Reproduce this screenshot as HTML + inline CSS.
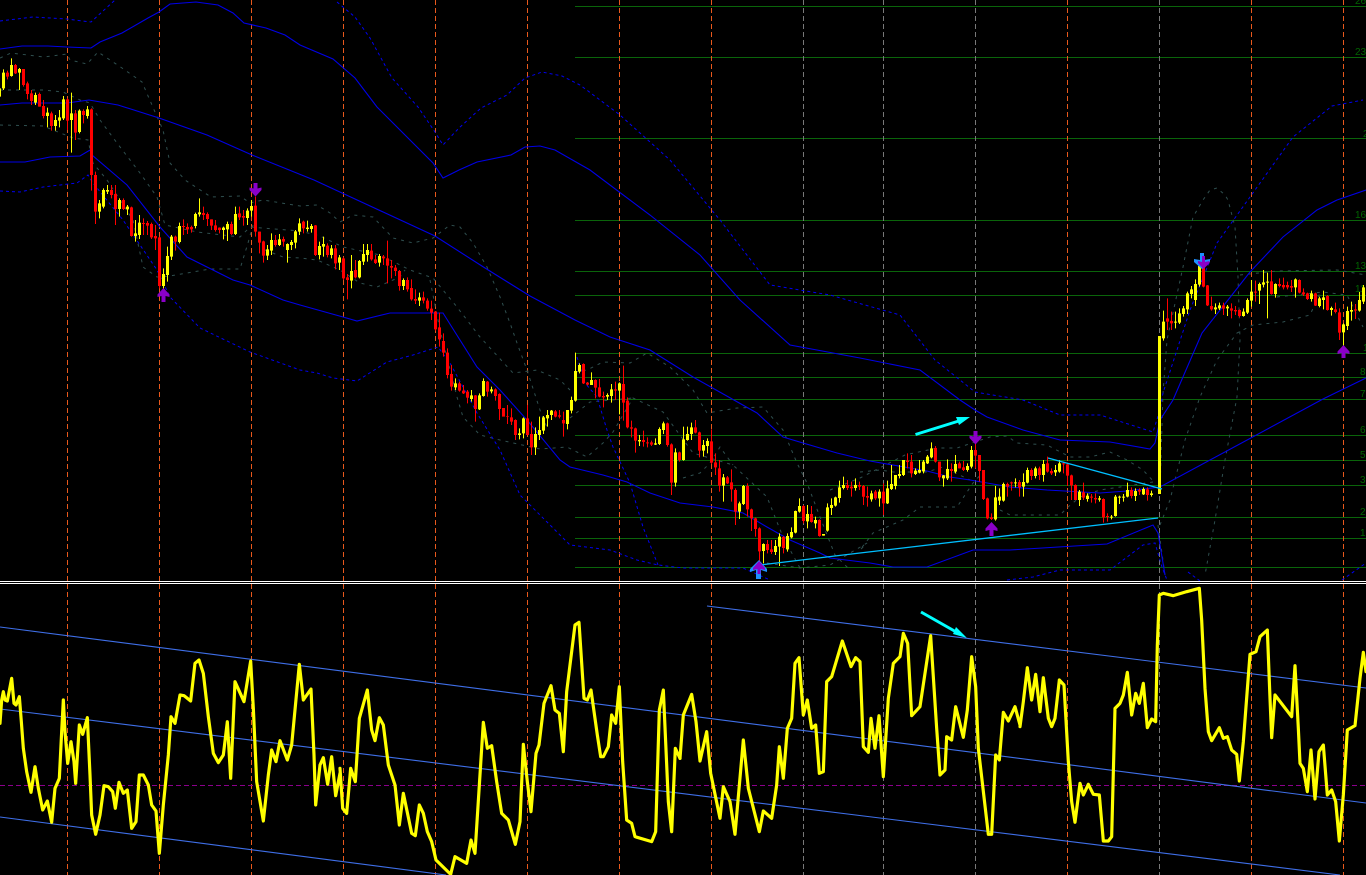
<!DOCTYPE html>
<html lang="en"><head><meta charset="utf-8"><title>Chart</title>
<style>html,body{margin:0;padding:0;background:#000;width:1366px;height:875px;overflow:hidden}svg{display:block}text{font-family:"Liberation Sans",sans-serif;font-size:10px;fill:#006400}</style></head>
<body>
<svg width="1366" height="875" viewBox="0 0 1366 875" xmlns="http://www.w3.org/2000/svg">
<rect width="1366" height="875" fill="#000"/>
<!-- horizontal levels -->
<path stroke="#0a640a" stroke-width="1" fill="none" d="M575 6.5H1366M575 57.5H1366M575 138.5H1366M575 220.5H1366M575 271.5H1366M575 295.5H1366M575 353.5H1366M575 377.5H1366M575 399.5H1366M575 435.5H1366M575 460.5H1366M575 485.5H1366M575 517.5H1366M575 538.5H1366M575 567.5H1366"/>
<text x="1355" y="4">2650</text><text x="1355" y="55">2350</text><text x="1363" y="137">20</text><text x="1355" y="218">1650</text><text x="1355" y="269">1350</text><text x="1355" y="292">1150</text><text x="1363" y="351">10</text><text x="1360" y="375">8</text><text x="1360" y="397">7</text><text x="1360" y="433">6</text><text x="1360" y="458">5</text><text x="1360" y="483">3</text><text x="1360" y="515">2</text><text x="1360" y="536">1</text>
<!-- vertical separators -->
<path stroke="#e8581c" stroke-width="1" stroke-dasharray="5 3" fill="none" d="M67.5 0V875M159.5 0V875M251.5 0V875M343.5 0V875M435.5 0V875M527.5 0V875M619.5 0V875M711.5 0V875M1067.5 0V875M1251.5 0V875M1343.5 0V875"/>
<path stroke="#787878" stroke-width="1" stroke-dasharray="5 3" fill="none" d="M803.5 0V875M883.5 0V875M975.5 0V875M1159.5 0V875"/>
<!-- grey dashed bands -->
<g fill="none" stroke="#2f4f4f" stroke-width="1" stroke-dasharray="3 5">
<polyline points="0,58 11,53 44,57 67,54 70,60 87,64 98,52 122,68 142,82 155,112 163,130 170,163 185,180 211,197 240,196 250,203 263,200 300,206 317,205 330,213 340,222 353,215 373,217 393,238 413,243 433,238 450,225 460,227 473,243 487,267 500,297 510,323 517,343 527,370 540,410 548,430"/>
<polyline points="0,90 20,90 43,90 63,92 80,100 90,103 100,120 117,143 140,173 157,197 165,225 197,232 240,237 250,227 300,231 320,236 343,247 380,255 410,270 433,278 457,307 480,337 513,373 537,370 560,380 570,390"/>
<polyline points="0,125 43,126 73,138 88,140 93,163 107,180 133,220 143,267 157,277 170,276 187,273 210,269 240,269 248,243 253,225"/>
<polyline points="265,250 283,257 300,258 317,260 340,270 360,283 377,287 400,277 405,270"/>
<polyline points="430,280 440,330 457,397 463,417 480,435 500,440 540,449 567,447 587,457 603,443 613,432 633,398 663,412 693,453 733,465 767,497 783,537 800,568"/>
<polyline points="575,372 587,370 603,362 630,363 647,353 670,367 693,390 707,413 737,408 763,407 783,430 797,463 807,483 820,517 835,555 850,570"/>
<polyline points="570,418 590,402 633,398"/>
<polyline points="683,478 700,473 710,463 720,447 733,465"/>
<polyline points="767,563 800,568 830,565 867,543 860,550 873,533 903,520 920,507 957,507 973,483 985,470"/>
<polyline points="860,472 880,470 893,472 927,472 943,467 970,480"/>
<polyline points="830,490 860,478 905,455 937,448 957,448 990,437 1007,436 1017,443 1047,445 1070,457 1090,457 1110,452 1127,460 1143,470 1155,483"/>
<polyline points="1000,510 1010,515 1060,515 1068,507 1080,497 1100,490 1153,482"/>
<polyline points="1160,490 1163,393 1167,340 1183,267 1193,217 1203,200 1210,190 1217,188 1225,195 1228,200 1235,227 1238,277 1240,340 1237,397 1225,460 1215,520 1205,575"/>
<polyline points="1160,525 1170,500 1185,440 1200,397 1217,360 1237,333 1253,325 1283,322 1310,315 1320,293"/>
<polyline points="1240,275 1277,271 1337,270 1366,275"/>
<polyline points="1277,297 1323,292 1347,295 1363,327"/>
<polyline points="1158,525 1165,575"/>
</g>
<!-- blue dotted bands -->
<g fill="none" stroke="#0000f0" stroke-width="1" stroke-dasharray="3 3">
<polyline points="0,21 33,17 67,19 91,22 115,0"/>
<polyline points="337,2 355,17 370,38 392,78 418,107 435,132 443,145 459,128 481,108 507,95 525,78 542,72 562,76 580,85 620,115 670,160 720,220 770,285 830,295 900,315 935,360 975,392 1023,400 1060,415 1100,415 1153,432 1160,410 1163,393 1190,310 1217,243 1250,197 1293,137 1332,106 1363,100"/>
<polyline points="0,191 20,192 43,187 77,183 88,175 93,183 123,220 157,270 170,297 200,328 250,352 300,370 317,373 333,378 357,381 387,362 413,355 438,347 450,363 477,413 500,450 520,495 570,545 610,550 637,560 658,565 683,568 743,568 770,580"/>
<polyline points="577,357 585,383 597,397 607,430 613,447 630,483 643,527 658,565"/>
<polyline points="1007,580 1033,577 1060,570 1110,570 1143,545 1155,543 1162,567 1167,580"/>
<polyline points="1342,580 1366,563"/>
<polyline points="1188,572 1200,581"/>
</g>
<!-- blue solid bands -->
<g fill="none" stroke="#0000e6" stroke-width="1.1">
<polyline points="0,105 22,103 67,103 89,100 118,105 159,118 207,135 252,155 314,180 355,199 435,236 485,268 530,296 575,320 610,337 650,350 693,377 757,413 783,437 803,443 837,453 870,461 927,471 950,477 970,480 1010,487 1047,490 1100,493 1127,491 1160,487 1323,399 1366,378"/>
<polyline points="0,162 25,162 50,157 80,156 90,150 92,155 127,185 160,227 187,257 233,280 250,285 283,300 300,305 343,317 357,321 390,313 420,313 443,313 477,367 500,390 527,420 560,460 570,467 603,475 627,482 650,493 680,503 713,507 743,513 767,527 790,540 820,553 830,558 870,563 893,567 927,567 973,550 1010,550 1107,544 1153,525 1158,533 1165,575"/>
<polyline points="0,49 22,46 48,46 67,47 91,48 100,42 122,33 148,18 159,12 170,4 196,2 218,5 233,13 244,23 266,28 285,35 300,45 333,59 355,78 377,107 407,137 433,163 443,178 459,170 477,162 511,155 525,147 540,146 555,150 590,170 650,215 700,255 740,300 790,345 860,358 920,370 960,400 975,410 987,417 1023,430 1060,440 1110,442 1150,449 1155,443 1160,420 1173,400 1202,333 1250,272 1283,237 1317,210 1337,200 1366,190"/>
</g>
<!-- candles group 1 -->
<g transform="translate(0.5,40) scale(1,0.33333)" fill="none">
<path stroke="#ffff00" stroke-width="1" d="M3 88V150M11 55V110M19 84V150M35 158V195M47 203V262M55 225V272M59 210V262M63 168V240M71 158V338M79 208V280M87 198V236M99 480V535M103 445V505M107 435V462M119 475V530M127 495V525M135 540V605M139 525V597M163 685V765M167 620V725M171 585V660M179 548V610M195 518V565M199 475V530M223 560V598M227 545V603M235 500V585M247 505V555M251 480V530M267 615V660M271 580V645M279 582V618M287 610V668M291 600V630M295 570V625M299 535V585"/>
<path stroke="#ff0000" stroke-width="1" d="M7 92V118M15 72V102M23 87V140M27 125V178M31 150V195M39 158V200M43 180V235M51 215V272M67 175V270M75 210V300M83 208V250M91 205V452M95 395V552M111 435V475M115 435V555M123 475V510M131 500V590M143 535V585M147 543V585M151 548V597M155 555V630M159 590V745M175 587V632M183 538V585M187 550V582M191 557V578M203 500V540M207 517V558M211 538V570M215 540V575M219 562V580M231 545V585M239 500V540M243 510V557M255 470V590M259 575V640M263 602V668M275 585V620M283 590V620"/>
<path stroke="#ffff00" stroke-width="3" d="M-1 145V170M3 98V145M11 75V108M19 87V98M35 165V188M47 218V228M55 240V258M59 232V242M63 178V235M71 220V240M79 212V276M87 208V228M99 490V515M103 450V500M107 450V455M119 480V507M127 500V508M135 580V588M139 548V585M163 702V738M167 648V705M171 590V650M179 558V606M195 522V558M199 517V523M223 563V570M227 552V568M235 522V582M247 512V534M251 498V512M267 628V647M271 600V632M279 598V615M287 612V630M291 606V615M295 574V608M299 550V575"/>
<path stroke="#ff0000" stroke-width="3" d="M7 98V110M15 75V100M23 87V135M27 130V162M31 160V183M39 162V200M43 198V228M51 220V258M67 178V242M75 220V278M83 213V225M91 208V405M95 405V515M111 450V465M115 462V507M123 480V507M131 502V588M143 549V552M147 549V557M151 552V592M155 588V595M159 592V738M175 590V605M183 558V561M187 561V568M191 561V568M203 519V525M207 522V537M211 538V557M215 556V570M219 563V570M231 552V582M239 520V532M243 528V533M255 497V575M259 575V608M263 604V647M275 600V615M283 597V605"/>
</g>
<!-- candles group 2 -->
<g transform="translate(0.5,200) scale(1,0.33333)" fill="none">
<path stroke="#ffff00" stroke-width="1" d="M307 62V95M311 72V98M319 125V178M323 110V170M331 135V175M339 165V210M351 165V265M359 180V235M363 132V195M367 132V185M379 162V200M403 235V270M419 278V318M455 535V570M471 570V605M479 580V630M483 535V590M491 560V580M519 685V718M523 652V715M535 682V765M539 650V720M543 648V702M547 630V680M551 630V660M567 630V688M571 590V640M575 458V605M579 490V520"/>
<path stroke="#ff0000" stroke-width="1" d="M303 62V100M315 75V168M327 130V172M335 135V208M343 172V240M347 222V298M355 180V235M371 132V182M375 165V192M383 165V195M387 122V250M391 180V235M395 195V228M399 210V272M407 232V275M411 238V302M415 268V312M423 275V310M427 295V332M431 302V360M435 333V392M439 338V440M443 400V470M447 445V535M451 495V572M459 545V575M463 555V582M467 570V610M475 585V665M487 543V590M495 565V602M499 580V660M507 615V672M511 625V675M515 658V720M527 615V705M531 665V765M555 630V652M559 630V655M563 635V710"/>
<path stroke="#ffff00" stroke-width="3" d="M307 83V87M311 78V87M319 138V165M323 132V140M331 145V165M339 172V188M351 213V242M359 183V232M363 162V185M367 150V165M379 168V188M403 240V258M419 292V302M455 550V562M471 586V597M479 586V628M483 543V588M491 568V574M519 700V705M523 655V700M535 702V742M539 690V705M543 652V692M547 645V655M551 632V645M567 630V672M571 600V632M575 513V602M579 495V515"/>
<path stroke="#ff0000" stroke-width="3" d="M303 65V85M315 76V165M327 137V165M335 145V190M343 175V235M347 232V240M355 210V232M371 152V178M375 178V189M383 170V175M387 175V197M391 198V203M395 203V213M399 213V258M407 240V268M411 264V298M415 297V302M423 292V302M427 302V326M431 326V338M435 335V388M439 382V418M443 423V458M447 458V525M451 522V560M459 550V572M463 572V580M467 575V593M475 586V627M487 545V575M495 568V588M499 582V627M503 624V650M507 648V650M511 652V665M515 660V705M527 655V705M531 702V742M555 634V650M559 646V650M563 660V670"/>
</g>
<!-- candles group 3 -->
<g transform="translate(0.5,350) scale(1,0.33333)" fill="none">
<path stroke="#ffff00" stroke-width="1" d="M591 67V105M607 130V150M611 102V158M619 97V193M639 255V288M655 265V285M659 232V285M663 215V252M675 295V410M683 230V332M687 230V272M691 218V270M703 270V320M707 265V310M723 372V455M739 455V507M743 405V465M763 580V640M775 570V615M779 550V648M787 550V605M791 532V565M795 482V550M799 445V488M807 465V535M815 500V535M823 552V557M827 460V545M831 445V495M835 440V470M839 392V458M843 380V418M855 385V422"/>
<path stroke="#ff0000" stroke-width="1" d="M583 40V102M587 96V106M595 88V145M599 87V142M603 125V172M615 95V150M623 47V212M627 142V235M631 212V262M635 233V308M643 242V290M647 262V292M651 272V288M667 218V290M671 280V435M679 305V335M695 210V250M699 245V322M711 238V342M715 310V375M719 330V425M727 378V402M731 358V455M735 415V525M747 400V500M751 476V543M755 503V560M759 532V650M767 570V610M771 570V612M783 558V610M803 465V520M811 468V518M819 508V560M847 390V420M851 395V440M859 395V420M863 405V465M867 410V470"/>
<path stroke="#ffff00" stroke-width="3" d="M591 90V105M607 135V140M611 118V138M619 100V122M639 270V274M655 280V284M659 237V282M663 220V240M675 307V398M683 268V330M687 252V270M691 232V252M703 285V302M707 273V288M723 382V407M739 460V485M743 408V462M763 582V603M775 588V606M779 560V590M787 558V598M791 546V562M795 483V548M799 468V485M807 492V514M815 510V520M823 552V557M827 472V542M831 465V474M835 442V467M839 412V444M843 405V414M855 405V414"/>
<path stroke="#ff0000" stroke-width="3" d="M583 42V100M587 98V104M595 90V113M599 112V140M603 138V142M615 118V122M623 102V158M627 152V232M631 232V236M635 235V272M643 270V276M647 277V280M651 277V284M667 220V285M671 283V398M679 307V330M695 232V248M699 247V302M711 274V338M715 337V352M719 355V407M727 382V400M731 397V418M735 420V485M747 408V478M751 478V505M755 505V537M759 535V604M767 582V600M771 598V606M783 561V594M803 468V513M811 492V516M819 510V558M847 405V414M851 410V415M859 405V410M863 408V440M867 438V443"/>
</g>
<!-- candles group 4 -->
<g transform="translate(0.5,400) scale(1,0.33333)" fill="none">
<path stroke="#ffff00" stroke-width="1" d="M871 272V305M879 268V320M887 242V312M891 195V270M895 225V268M899 195V235M903 180V228M915 205V225M919 180V220M923 180V220M927 165V192M931 127V175M943 225V260M947 178V240M955 165V220M967 190V215M971 138V205M995 258V362M999 265V315M1003 248V305M1015 235V262M1023 220V290M1027 203V250M1035 200V235M1043 180V245M1055 195V228M1059 180V218M1079 270V318M1087 280V305M1099 288V305M1111 345V358M1115 285V350M1119 287V312M1123 282V305M1127 248V292M1135 265V303M1143 262V285M1151 272V290"/>
<path stroke="#ff0000" stroke-width="1" d="M863 255V315M867 260V318M875 270V300M883 250V345M907 160V205M911 165V232M935 138V188M939 185V243M951 190V245M959 185V205M963 183V213M975 110V205M979 165V245M983 210V300M987 293V358M991 340V360M1007 248V290M1011 245V272M1019 240V290M1031 205V240M1039 200V240M1047 170V218M1051 205V225M1063 185V220M1067 188V258M1071 224V300M1075 253V300M1083 248V300M1091 282V308M1095 280V310M1103 295V368M1107 340V365M1131 262V295M1139 265V285M1147 262V302"/>
<path stroke="#ffff00" stroke-width="3" d="M871 280V298M879 275V295M887 265V310M891 252V267M895 225V258M899 222V228M903 180V225M915 212V222M919 210V218M923 185V214M927 170V190M931 145V172M943 226V235M947 207V235M955 192V215M967 198V210M971 150V200M995 292V358M999 290V302M1003 252V302M1015 247V250M1023 246V260M1027 210V248M1035 205V228M1043 192V225M1055 210V217M1059 190V215M1079 275V300M1087 287V297M1099 295V299M1111 350V353M1115 290V348M1119 290V293M1123 290V293M1127 270V290M1135 273V288M1143 267V283M1151 280V285"/>
<path stroke="#ff0000" stroke-width="3" d="M863 258V290M867 288V292M875 275V295M883 275V310M907 182V186M911 185V220M935 144V185M939 185V232M951 207V213M959 190V205M963 202V210M975 150V167M979 165V213M983 210V297M987 295V355M991 352V357M1007 252V260M1011 247V250M1019 246V262M1031 210V228M1039 205V225M1047 190V215M1051 213V220M1063 190V193M1067 193V227M1071 226V256M1075 255V300M1083 277V293M1091 290V293M1095 294V298M1103 297V352M1107 348V351M1131 270V288M1139 270V275M1147 268V285"/>
</g>
<!-- spike candle -->
<path stroke="#ffff00" stroke-width="3" fill="none" d="M1159.5 336V494"/>
<!-- candles group 5 -->
<g transform="translate(0.5,200) scale(1,0.33333)" fill="none">
<path stroke="#ffff00" stroke-width="1" d="M1163 332V422M1175 335V385M1179 325V372M1183 318V350M1187 275V342M1191 258V295M1195 238V318M1199 198V260M1215 310V342M1219 308V330M1227 315V348M1243 325V350M1247 295V342M1251 240V320M1259 248V312M1263 210V262M1267 218V355M1275 250V293M1295 235V293M1311 272V305M1319 290V322M1323 272V328M1331 320V347M1343 370V442M1347 320V390M1351 305V362M1359 276V335M1363 255V312"/>
<path stroke="#ff0000" stroke-width="1" d="M1167 295V390M1171 335V390M1203 195V262M1207 255V318M1211 290V332M1223 308V345M1231 310V355M1235 318V345M1239 328V352M1255 242V305M1271 210V284M1279 235V262M1283 233V268M1287 245V268M1291 240V276M1299 238V280M1303 265V288M1307 278V300M1315 278V318M1327 285V332M1335 308V340M1339 325V420M1355 312V357"/>
<path stroke="#ffff00" stroke-width="3" d="M1163 365V415M1175 365V368M1179 340V368M1183 325V342M1187 280V328M1191 268V282M1195 252V300M1199 198V254M1215 322V328M1219 316V325M1227 320V325M1243 335V348M1247 300V338M1251 275V302M1259 252V272M1263 247V254M1267 245V248M1275 252V282M1295 238V262M1311 280V297M1319 295V318M1323 292V300M1331 324V330M1343 373V397M1347 333V378M1351 330V335M1359 300V332M1363 262V305"/>
<path stroke="#ff0000" stroke-width="3" d="M1167 355V365M1171 363V370M1203 200V260M1207 256V316M1211 318V328M1223 316V326M1231 325V332M1235 330V334M1239 330V348M1255 275V278M1271 244V282M1279 252V258M1283 255V262M1287 255V262M1291 258V263M1299 240V278M1303 277V283M1307 280V297M1315 280V317M1327 288V330M1335 328V336M1339 337V398M1355 328V332"/>
</g>
<!-- trend lines -->
<path stroke="#00bfff" stroke-width="1.3" fill="none" d="M760 565L860 553L1158 518M1048 458L1162 489"/>
<!-- cyan arrows -->
<path stroke="#00ffff" stroke-width="3" fill="none" d="M915.5 434.5L962 420M921 612L958 633"/>
<path fill="#00ffff" d="M970 417L956 417L959 425ZM967 638L956 627L953 634Z"/>
<!-- signal arrows -->
<g fill="#8a00c8">
<path d="M253.5 183H257.5V188.5L261.5 187.5V190L255.5 196.5L249.5 190V187.5L253.5 188.5Z"/>
<path d="M973.5 431H977.5V436.5L981.5 435.5V438L975.5 444.5L969.5 438V435.5L973.5 436.5Z"/>
<path d="M163.5 288L169.5 294.5V297L165.5 296V302H161.5V296L157.5 297V294.5Z"/>
<path d="M991.5 522L997.5 528.5V531L993.5 530V536H989.5V530L985.5 531V528.5Z"/>
<path d="M1343.5 345L1349.5 351.5V354L1345.5 353V358H1341.5V353L1337.5 354V351.5Z"/>
</g>
<path fill="#1e90ff" d="M1200 253H1204V260L1210 259V262L1202 269L1194 262V259L1200 260Z"/>
<path fill="#8a00c8" d="M1202 256H1205V262L1209.5 261V263L1203.5 269L1198 263V261L1202 262Z"/>
<path fill="#1e90ff" d="M759 560L767 569V572L761 570V579H756V570L750 572V569Z"/>
<path fill="#8a00c8" d="M759 561L765 568V570L760.5 569V574H757.5V569L753 570V568Z"/>
<!-- separator -->
<rect x="0" y="581" width="1366" height="1" fill="#fff"/>
<rect x="0" y="583" width="1366" height="1" fill="#fff"/>
<rect x="0" y="582" width="1366" height="1" fill="#000"/>
<rect x="0" y="584" width="1366" height="3" fill="#000"/>
<path stroke="#e8581c" stroke-width="1" stroke-dasharray="5 3" fill="none" d="M67.5 584V875M159.5 584V875M251.5 584V875M343.5 584V875M435.5 584V875M527.5 584V875M619.5 584V875M711.5 584V875M1067.5 584V875M1251.5 584V875M1343.5 584V875"/>
<path stroke="#787878" stroke-width="1" stroke-dasharray="5 3" fill="none" d="M803.5 584V875M883.5 584V875M975.5 584V875M1159.5 584V875"/>
<!-- lower pane -->
<path stroke="#8b008b" stroke-width="1" stroke-dasharray="5 3" fill="none" d="M0 785.5H1366"/>
<path stroke="#3f6fe8" stroke-width="1.1" fill="none" d="M0 627L1366 803M0 709L1340 875M0 817L446 875M707 606L1366 688"/>
<g fill="none" stroke="#ffff00" stroke-width="9.5" stroke-linejoin="round" stroke-linecap="round">
<polyline transform="translate(0,575) scale(.33333)" points="0,445 5,375 10,350 15,375 22,378 35,310 42,385 48,390 58,365 64,440 70,520 80,590 93,652 105,575 115,640 128,705 142,678 155,742 165,640 178,610 185,470 190,375 195,470 203,565 213,500 222,560 227,625 238,450 248,478 262,428 270,600 275,720 287,778 300,720 312,632 325,635 338,650 346,700 357,622 370,655 382,645 395,760 408,740 418,600 430,600 445,630 455,690 468,708 478,835 490,690 505,540 513,425 525,445 540,360 552,362 572,378 585,265 597,255 610,295 625,425 640,535 655,563 670,540 682,440 692,610 705,320 732,380 752,258 760,400 770,620 790,738 805,600 815,525 828,560 840,497 862,555 875,510 898,268 910,375 933,342 942,540 947,690 960,570 970,548 983,628 995,545 1007,662 1020,595"/>
<polyline transform="translate(340,575) scale(.33333)" points="0,580 8,700 20,715 32,580 46,620 58,430 82,345 95,465 105,497 118,428 130,450 145,570 165,630 178,750 190,655 215,775 226,782 238,690 250,715 262,770 275,800 288,855 332,898 345,845 380,865 393,795 405,835 430,442 442,520 455,512 470,620 485,715 505,735 526,808 540,740 550,508 562,620 573,710 588,535 597,510 612,385 633,332 645,405 658,415 670,530 680,350 705,150 717,142 732,370 742,375 753,345 772,480 782,545 790,545 805,515 815,420 827,445 838,335 848,560 860,735 875,745 885,785 935,800 947,770 958,405 970,345 985,680 995,770 1006,520 1020,550"/>
<polyline transform="translate(680,575) scale(.33333)" points="0,550 10,420 35,358 48,440 60,558 80,470 92,595 120,730 130,635 150,680 165,778 190,495 205,640 238,770 250,708 275,730 290,630 298,515 310,610 322,460 335,430 345,265 357,248 370,420 382,375 395,460 407,450 418,595 430,590 440,320 455,305 487,198 513,275 527,248 540,260 550,515 565,532 573,430 585,520 597,422 610,605 625,370 640,265 660,245 670,175 683,205 695,422 720,395 752,182 770,460 780,600 795,585 800,485 815,495 827,395 850,487 862,405 875,245 887,335 895,520 925,778 935,778 947,540 958,555 970,412 985,438 1005,395 1020,450"/>
<polyline transform="translate(1020,575) scale(.33333)" points="0,455 10,380 22,278 35,375 47,298 60,410 70,308 85,430 95,455 105,430 118,315 132,330 145,560 155,680 165,742 180,625 190,660 205,628 220,658 238,660 250,798 265,798 275,785 285,400 300,385 310,360 322,292 335,420 347,355 358,385 370,325 382,458 395,432 407,440 412,210 418,60 430,55 460,62 500,50 538,40 545,135 555,340 565,470 575,497 598,458 610,490 622,485 635,525 650,538 658,618 670,500 690,238 708,230 720,185 742,165 750,370 755,488 765,360 815,425 825,272 835,460 840,565 850,580 862,650 873,525 885,672 897,530 910,510 922,660 935,645 947,680 958,798 970,660 982,465 1005,452 1020,310 1030,232 1038,290"/>
</g>
</svg>
</body></html>
